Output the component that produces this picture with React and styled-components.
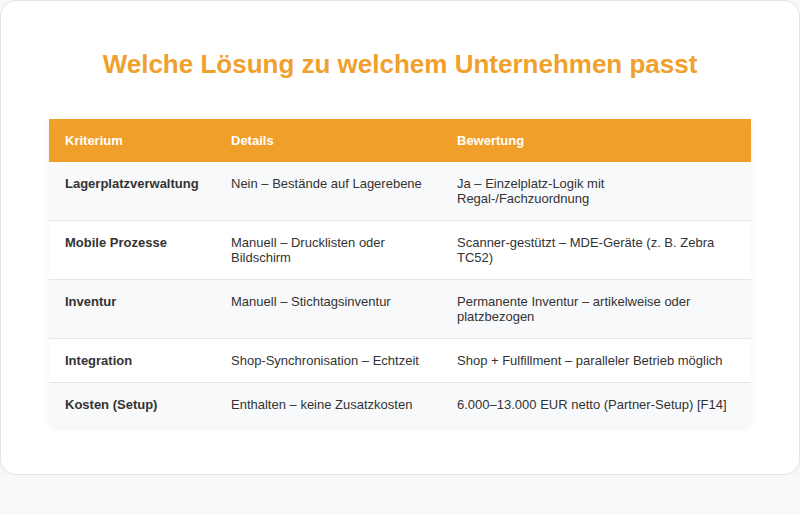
import React from 'react';
import styled, { createGlobalStyle } from 'styled-components';

const GlobalStyle = createGlobalStyle`
  body {
    margin: 0;
    background-color: #f8f9fa;
    font-family: "Liberation Sans", Arial, sans-serif;
  }
`;

const Card = styled.section`
  background-color: #ffffff;
  border: 1px solid #e2e4e7;
  border-radius: 16px;
  padding: 48px;
  box-shadow: 0 2px 8px rgba(0, 0, 0, 0.04);
`;

const Title = styled.h2`
  margin: 0 0 40px;
  text-align: center;
  color: #f0a02c;
  font-size: 26px;
  line-height: 30px;
  font-weight: 700;
`;

const Table = styled.table`
  width: 100%;
  table-layout: fixed;
  border-collapse: collapse;
  font-size: 13px;
  line-height: 15px;
  color: #333333;
  box-shadow: 0 2px 10px rgba(0, 0, 0, 0.06);
  border-radius: 0 0 8px 8px;
  overflow: hidden;
`;

const HeadCell = styled.th`
  box-sizing: border-box;
  background-color: #f0a02a;
  color: #ffffff;
  text-align: left;
  font-weight: 700;
  padding: 14px 16px;
  width: ${(p) => p.$width || 'auto'};
`;

const Row = styled.tr`
  background-color: ${(p) => (p.$shaded ? '#f8f9fa' : '#ffffff')};
  border-bottom: ${(p) => (p.$last ? 'none' : '1px solid #e3e5e8')};
`;

const Cell = styled.td`
  padding: 14px 16px;
  vertical-align: top;
  font-weight: ${(p) => (p.$strong ? 700 : 400)};
`;

const rows = [
  ['Lagerplatzverwaltung', 'Nein – Bestände auf Lagerebene', 'Ja – Einzelplatz-Logik mit Regal-/Fachzuordnung'],
  ['Mobile Prozesse', 'Manuell – Drucklisten oder Bildschirm', 'Scanner-gestützt – MDE-Geräte (z. B. Zebra TC52)'],
  ['Inventur', 'Manuell – Stichtagsinventur', 'Permanente Inventur – artikelweise oder platzbezogen'],
  ['Integration', 'Shop-Synchronisation – Echtzeit', 'Shop + Fulfillment – paralleler Betrieb möglich'],
  ['Kosten (Setup)', 'Enthalten – keine Zusatzkosten', '6.000–13.000 EUR netto (Partner-Setup) [F14]'],
];

const App = () => {
  return (
    <>
      <GlobalStyle />
      <Card>
        <Title>Welche Lösung zu welchem Unternehmen passt</Title>
        <Table>
          <thead>
            <tr>
              <HeadCell $width="166px">Kriterium</HeadCell>
              <HeadCell $width="226px">Details</HeadCell>
              <HeadCell>Bewertung</HeadCell>
            </tr>
          </thead>
          <tbody>
            {rows.map((r, i) => (
              <Row key={r[0]} $shaded={i % 2 === 0} $last={i === rows.length - 1}>
                <Cell $strong>{r[0]}</Cell>
                <Cell>{r[1]}</Cell>
                <Cell>{r[2]}</Cell>
              </Row>
            ))}
          </tbody>
        </Table>
      </Card>
    </>
  );
};

export default App;
